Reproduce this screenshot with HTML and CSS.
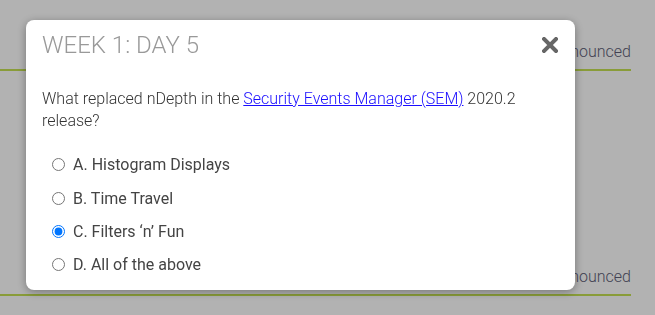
FILE: index.html
```html
<!DOCTYPE html>
<html lang="en">
<head>
    <meta charset="UTF-8">
    <meta name="viewport" content="width=device-width, initial-scale=1.0">
    <title>Week 1: Day 5</title>
    <link rel="stylesheet" href="styles.css">
</head>
<body>
    <div class="page">
        <div class="row"><span class="row-status">Announced</span></div>
        <div class="row"><span class="row-status">Announced</span></div>
    </div>

    <div class="overlay"></div>

    <div class="modal">
        <div class="modal-header">
            <h2 class="modal-title">WEEK 1: DAY 5</h2>
            <button class="modal-close" aria-label="Close">
                <svg width="16" height="16" viewBox="0 0 16 16">
                    <path d="M2 2 L14 14 M14 2 L2 14" stroke="#666" stroke-width="4" stroke-linecap="square"/>
                </svg>
            </button>
        </div>
        <p class="question">What replaced nDepth in the <a href="#">Security Events Manager (SEM)</a> 2020.2 release?</p>
        <form class="options">
            <label class="option"><input type="radio" name="answer"> A. Histogram Displays</label>
            <label class="option"><input type="radio" name="answer"> B. Time Travel</label>
            <label class="option"><input type="radio" name="answer" checked> C. Filters ‘n’ Fun</label>
            <label class="option"><input type="radio" name="answer"> D. All of the above</label>
        </form>
    </div>
</body>
</html>
```

FILE: styles.css
```css
body {
    margin: 0;
    font-family: Roboto, sans-serif;
    background: #fff;
    color: #444;
    overflow: hidden;
}
.page {
    padding: 33px 24px 0 0;
}
.row {
    height: 36px;
    border-bottom: 2px solid #c4e052;
    text-align: right;
    margin-bottom: 187px;
    font-size: 16px;
    line-height: 20px;
    font-weight: 300;
    color: #5f5f78;
}
.row:last-child {
    margin-bottom: 0;
}
.row-status {
    display: inline-block;
    padding-top: 9px;
}
.overlay {
    position: fixed;
    inset: 0;
    background: rgba(0, 0, 0, 0.3);
}
.modal {
    position: fixed;
    left: 26px;
    top: 20px;
    width: 549px;
    box-sizing: border-box;
    padding: 11px 17px 8px 16px;
    background: #fff;
    border-radius: 8px;
    box-shadow: 0 2px 10px rgba(0, 0, 0, 0.35);
}
.modal-header {
    display: flex;
    justify-content: space-between;
    align-items: center;
}
.modal-title {
    margin: 0;
    font-size: 24px;
    line-height: 28px;
    font-weight: 300;
    color: #999;
}
.modal-close {
    border: none;
    background: none;
    padding: 0;
    display: flex;
    cursor: pointer;
}
.question {
    margin: 29px 0 0;
    font-size: 16px;
    line-height: 22px;
    font-weight: 300;
    color: #333;
}
.question a {
    color: #1a0dff;
}
.options {
    margin-top: 16px;
    padding-left: 10px;
}
.option {
    display: flex;
    align-items: center;
    height: 33.4px;
    font-size: 16px;
    color: #444;
}
.option input {
    margin: 0 8px 0 0;
    width: 13px;
    height: 13px;
}
```
